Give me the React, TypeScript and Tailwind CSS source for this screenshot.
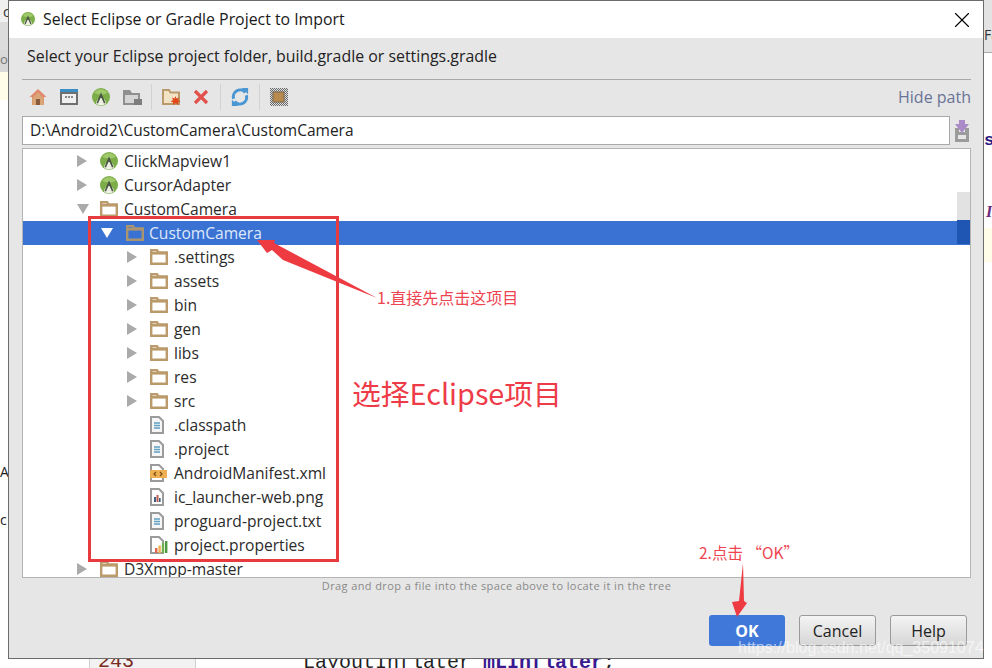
import React from "react"
import { X } from "lucide-react"

const uiFont = "font-['Open_Sans',sans-serif]"

// Android head with compass in a green disc, used on module rows and in the title bar
function AndroidIcon({ size = 18 }: { size?: number }) {
  return (
    <svg width={size} height={size} viewBox="0 0 18 18" className="shrink-0">
      <circle cx="9" cy="9" r="9" fill="#7dad48" />
      <path d="M2.2 5 A8 8 0 0 1 15.8 5 L9 7 Z" fill="#a0c96b" />
      <path d="M4 15.5 A5 5.4 0 0 1 14 15.5 A8 8 0 0 1 4 15.5 Z" fill="#eef0e4" />
      <path d="M9 4.5 L10 6.5 L13.5 15 L12 15.6 L9.6 10 H8.4 L6 15.6 L4.5 15 L8 6.5 Z" fill="#4c5646" />
      <circle cx="6.8" cy="11.6" r="0.7" fill="#4c5646" />
      <circle cx="11.2" cy="11.6" r="0.7" fill="#4c5646" />
    </svg>
  )
}

function FolderIcon({ fill = "#ffffff", stroke = "#bb9b6c" }: { fill?: string; stroke?: string }) {
  return (
    <svg width="18" height="16" viewBox="0 0 18 16" className="shrink-0">
      <path d="M1.2 14.8 V1.2 H7 L8.5 3.5 H16.8 V14.8 Z" fill={fill} stroke={stroke} strokeWidth="2.4" />
      <rect x="1" y="3" width="16" height="2.6" fill={stroke} />
    </svg>
  )
}

function TextFileIcon() {
  return (
    <svg width="14" height="18" viewBox="0 0 14 18" className="shrink-0">
      <path d="M1 1 H9 L13 5 V17 H1 Z" fill="#f6f6f6" stroke="#9b9b9b" strokeWidth="2" />
      <path d="M4 7 H10 M4 9.5 H10 M4 12 H10" stroke="#5f9fc4" strokeWidth="1.3" />
    </svg>
  )
}

function XmlFileIcon() {
  return (
    <svg width="17" height="18" viewBox="0 0 17 18" className="shrink-0">
      <path d="M1 1 H9 L13 5 V17 H1 Z" fill="#fff" stroke="#9b9b9b" strokeWidth="2" />
      <rect x="0" y="6" width="17" height="8" fill="#eeb052" />
      <path d="M6 8 L4 10 L6 12 M10 8 L12 10 L10 12" fill="none" stroke="#7a4a12" strokeWidth="1.2" />
    </svg>
  )
}

function ImageFileIcon() {
  return (
    <svg width="14" height="18" viewBox="0 0 14 18" className="shrink-0">
      <path d="M1 1 H9 L13 5 V17 H1 Z" fill="#fff" stroke="#9b9b9b" strokeWidth="2" />
      <rect x="4" y="9" width="2" height="5" fill="#3f5f86" />
      <rect x="6.5" y="7" width="2" height="7" fill="#c25b4f" />
      <rect x="9" y="10" width="1.6" height="4" fill="#3f5f86" />
    </svg>
  )
}

function ChartFileIcon() {
  return (
    <svg width="18" height="18" viewBox="0 0 18 18" className="shrink-0">
      <path d="M1 1 H9 L13 5 V17 H1 Z" fill="#fff" stroke="#9b9b9b" strokeWidth="2" />
      <rect x="5" y="12" width="2.4" height="5" fill="#e2644f" />
      <rect x="8.4" y="9.5" width="2.4" height="7.5" fill="#eeb052" />
      <rect x="11.8" y="7" width="2.4" height="10" fill="#6fb04a" />
      <rect x="15" y="5" width="2.4" height="12" fill="#4f9a3f" />
    </svg>
  )
}

function Toolbar() {
  return (
    <div className="flex items-center h-[34px] pl-[7px] justify-between">
      <div className="flex items-center">
        <span className="w-[18px] mr-[13px] flex justify-center">
          <svg width="18" height="18" viewBox="0 0 18 18">
            <path d="M9 1 L17.5 9 L15 9 L15 17 H3 V9 H0.5 Z" fill="#e08a6c" />
            <path d="M3.5 10 L9 4.6 L14.5 10 V17 H3.5 Z" fill="#d9a678" />
            <rect x="7" y="11" width="4" height="6" fill="#8a5a3c" />
          </svg>
        </span>
        <span className="w-[18px] mr-[14px]">
          <svg width="18" height="16" viewBox="0 0 18 16">
            <rect x="0" y="0" width="18" height="16" fill="#6f6f6f" />
            <rect x="0" y="0" width="18" height="3" fill="#3c8fc4" />
            <rect x="2" y="5" width="14" height="9" fill="#f0f0f0" />
            <path d="M5 8 H7 M8 8 H10 M11 8 H13" stroke="#666" strokeWidth="1.4" />
          </svg>
        </span>
        <span className="w-[18px] mr-[13px]"><AndroidIcon /></span>
        <span className="w-[18px] mr-[10px]">
          <svg width="19" height="15" viewBox="0 0 19 15">
            <path d="M0 15 V0 H7 L9 3 H17 V15 Z" fill="#8f8f8f" />
            <rect x="2" y="5" width="13" height="8" fill="#d5d5d5" />
            <rect x="11" y="9" width="8" height="6" fill="#7d7d7d" />
          </svg>
        </span>
        <span className="w-px h-[26px] bg-[#d2d2d2] mr-[10px]" />
        <span className="w-[19px] mr-[12px]">
          <svg width="19" height="16" viewBox="0 0 19 16">
            <path d="M1 15 V1 H7 L8.5 3.5 H17 V15 Z" fill="#f1e3c4" stroke="#b99a6b" strokeWidth="2" />
            <path d="M13.5 7 L14.5 9.5 L17.5 8.5 L16 11 L18.5 12.5 L16 13 L16.5 16 L13.5 14 L11 16 L11 13.3 L8.5 12.5 L11 11 L10 8.5 L12.6 9.5 Z" fill="#e1481c" />
          </svg>
        </span>
        <span className="w-[16px] mr-[11px]">
          <svg width="16" height="16" viewBox="0 0 16 16">
            <path d="M2 2 L14 14 M14 2 L2 14" stroke="#e2524d" strokeWidth="3.2" />
          </svg>
        </span>
        <span className="w-px h-[26px] bg-[#d2d2d2] mr-[10px]" />
        <span className="w-[20px] mr-[8px]">
          <svg width="18" height="20" viewBox="0 0 20 20" fill="none">
            <path d="M16 5 A7.5 7.5 0 0 0 3 12" stroke="#4a96d3" strokeWidth="3.4" />
            <path d="M4 15 A7.5 7.5 0 0 0 17 8" stroke="#4a96d3" strokeWidth="3.4" />
            <path d="M12 0 H19 V7 Z M8 20 H1 V13 Z" fill="#4a96d3" />
          </svg>
        </span>
        <span className="w-px h-[26px] bg-[#d2d2d2] mr-[10px]" />
        <span className="w-[18px]">
          <svg width="18" height="18" viewBox="0 0 18 18">
            <defs>
              <pattern id="stipple" width="2" height="2" patternUnits="userSpaceOnUse">
                <rect width="2" height="2" fill="#e0e0e0" />
                <rect width="1" height="1" fill="#6a6a6a" />
                <rect x="1" y="1" width="1" height="1" fill="#6a6a6a" />
              </pattern>
            </defs>
            <rect width="18" height="18" fill="url(#stipple)" />
            <rect x="3" y="4" width="11" height="10" fill="#b98a4e" stroke="#7d6a52" />
          </svg>
        </span>
      </div>
      <span className="text-[16px] text-[#6a7396]">Hide path</span>
    </div>
  )
}

type Row = { label: string; indent: number; arrow?: "right" | "down"; icon: React.ReactNode; selected?: boolean }

const rows: Row[] = [
  { label: "ClickMapview1", indent: 54, arrow: "right", icon: <AndroidIcon /> },
  { label: "CursorAdapter", indent: 54, arrow: "right", icon: <AndroidIcon /> },
  { label: "CustomCamera", indent: 54, arrow: "down", icon: <FolderIcon /> },
  { label: "CustomCamera", indent: 78, arrow: "down", icon: <FolderIcon fill="#3a72d4" stroke="#ab9570" />, selected: true },
  { label: ".settings", indent: 104, arrow: "right", icon: <FolderIcon /> },
  { label: "assets", indent: 104, arrow: "right", icon: <FolderIcon /> },
  { label: "bin", indent: 104, arrow: "right", icon: <FolderIcon /> },
  { label: "gen", indent: 104, arrow: "right", icon: <FolderIcon /> },
  { label: "libs", indent: 104, arrow: "right", icon: <FolderIcon /> },
  { label: "res", indent: 104, arrow: "right", icon: <FolderIcon /> },
  { label: "src", indent: 104, arrow: "right", icon: <FolderIcon /> },
  { label: ".classpath", indent: 104, icon: <TextFileIcon /> },
  { label: ".project", indent: 104, icon: <TextFileIcon /> },
  { label: "AndroidManifest.xml", indent: 104, icon: <XmlFileIcon /> },
  { label: "ic_launcher-web.png", indent: 104, icon: <ImageFileIcon /> },
  { label: "proguard-project.txt", indent: 104, icon: <TextFileIcon /> },
  { label: "project.properties", indent: 104, icon: <ChartFileIcon /> },
  { label: "D3Xmpp-master", indent: 54, arrow: "right", icon: <FolderIcon /> },
]

function TreeRow({ row }: { row: Row }) {
  return (
    <div className={`flex items-center h-6 shrink-0 ${row.selected ? "bg-[#3a72d4] text-[#dfe9fa]" : "text-[#2b2b2b]"}`}>
      <span className="shrink-0" style={{ width: row.indent }} />
      <span className={`shrink-0 flex ${row.selected ? "w-[25px]" : "w-[23px]"}`}>
        {row.arrow === "right" && (
          <svg width="10" height="12" viewBox="0 0 10 12"><path d="M0 0 L10 6 L0 12 Z" fill="#aaaaaa" /></svg>
        )}
        {row.arrow === "down" && (
          <svg width="12" height="10" viewBox="0 0 12 10"><path d="M0 0 H12 L6 10 Z" fill={row.selected ? "#ffffff" : "#aaaaaa"} /></svg>
        )}
      </span>
      <span className={`shrink-0 flex ${row.selected ? "w-[23px]" : "w-[24px]"}`}>{row.icon}</span>
      <span className="text-[15.6px] whitespace-nowrap leading-none pt-[2px]">{row.label}</span>
    </div>
  )
}

function Tree() {
  return (
    <div className="relative h-[430px] border border-[#b4b4b4] bg-white overflow-hidden flex flex-col">
      <div className="flex flex-col">
        {rows.map((row, i) => (
          <TreeRow key={i} row={row} />
        ))}
      </div>
      {/* scrollbar thumb sits over the rows */}
      <div className="absolute right-0 top-[43px] w-[13px] flex flex-col">
        <div className="h-[28px] bg-[#e2e2e2]" />
        <div className="h-6 bg-[#1f56b4]" />
      </div>
    </div>
  )
}

function DialogButton({ label, primary }: { label: string; primary?: boolean }) {
  return primary ? (
    <button className="w-[76px] h-[31px] rounded-[3px] bg-[#3f78d8] text-white text-[16px] font-bold">{label}</button>
  ) : (
    <button className="w-[77px] h-[31px] rounded-[3px] border border-[#9a9a9a] bg-gradient-to-b from-[#f4f4f4] to-[#d6d6d6] text-[#222] text-[16px]">
      {label}
    </button>
  )
}

// Bits of the IDE window left showing around the dialog
function Backdrop() {
  return (
    <>
      <div className="absolute left-0 top-0 w-2 h-[72px] bg-[#f0f0f0] overflow-hidden">
        <span className="absolute left-[3px] top-[1px] text-[14px] text-[#333]">c</span>
        <span className="absolute left-0 top-[22px] w-2 h-[28px] bg-[#dcdcdc]" />
        <span className="absolute left-0 top-[50px] w-2 h-[22px] bg-[#d8d8d8] text-[13px] text-[#777]">oi</span>
      </div>
      <div className="absolute left-0 top-[72px] w-2 h-7 bg-[#fffde8]" />
      <span className="absolute left-0 top-[461px] text-[14px] text-[#222]">A</span>
      <span className="absolute left-0 top-[509px] text-[14px] text-[#222]">c</span>
      <div className="absolute left-[984px] top-0 w-2 h-[53px] overflow-hidden bg-[#e3e3e3]">
        <span className="absolute left-0 top-[24px] text-[14px] text-[#333]">Fa</span>
        <span className="absolute left-0 top-[52px] w-2 h-px bg-[#aaa]" />
      </div>
      <span className="absolute left-[984px] top-[128px] text-[17px] font-bold text-[#2a1a80] font-['Liberation_Mono',monospace]">s</span>
      <span className="absolute left-[986px] top-[200px] text-[16px] font-bold italic text-[#6a2a80] font-['Liberation_Serif',serif]">I</span>
      <div className="absolute left-[984px] top-[228px] w-2 h-[34px] bg-[#fffde8]" />
      <div className="absolute left-[89px] top-[659px] w-[107px] h-[9px] bg-[#f2f2f2] border-l border-r border-[#cfcfcf]" />
      <div className="absolute left-[98px] top-[652px] text-[20px] leading-5 text-[#7a2a20] font-['Liberation_Mono',monospace]">243</div>
      <div className="absolute left-[303px] top-[653px] text-[20px] leading-5 text-[#222] font-['Liberation_Mono',monospace] whitespace-pre">
        LayoutInflater <b className="text-[#3a1a90] font-bold">mLInflater</b>;
      </div>
    </>
  )
}

function Annotations() {
  return (
    <>
      <div className="absolute left-[88px] top-[216px] w-[251px] h-[346px] border-[3px] border-[#e83b40]" />
      <svg className="absolute left-0 top-0 pointer-events-none" width="992" height="668">
        <path d="M257 240 L275 240 L274 243 L377 298 L283 260 L272 250 L267 253 Z" fill="#ee3b42" />
        <path d="M743 563 L744 601 L747 603 L737 617 L732 602 L739 601 Z" fill="#ee3b42" />
      </svg>
      <span className="absolute left-[377px] top-[287px] text-[16px] leading-5 text-[#ee4450] font-['Noto_Sans_CJK_SC',sans-serif] whitespace-nowrap">
        1.直接先点击这项目
      </span>
      <span className="absolute left-[352px] top-[373px] text-[28.8px] leading-10 text-[#ee3b48] font-['Noto_Sans_CJK_SC',sans-serif] whitespace-nowrap">
        选择Eclipse项目
      </span>
      <span className="absolute left-[699px] top-[542px] text-[15.5px] leading-5 text-[#ee4450] font-['Noto_Sans_CJK_SC',sans-serif] whitespace-nowrap">
        2.点击 “OK”
      </span>
      <span className="absolute left-[738px] top-[638px] text-[16px] leading-5 text-white/60 font-['Liberation_Sans',sans-serif] whitespace-nowrap">
        https://blog.csdn.net/qq_35091074
      </span>
    </>
  )
}

export default function App() {
  return (
    <div className={`relative w-[992px] h-[668px] bg-white overflow-hidden ${uiFont}`}>
      <Backdrop />
      <div className="absolute left-2 top-0 w-[976px] h-[659px] border border-[#6b6b6b] bg-[#e6e6e6] flex flex-col">
        {/* Title bar */}
        <div className="h-[37px] shrink-0 bg-white flex items-center pl-3 pr-[8px] justify-between">
          <div className="flex items-center gap-2 text-[15.85px] text-[#1a1a1a]">
            <AndroidIcon size={14} />
            <span>Select Eclipse or Gradle Project to Import</span>
          </div>
          <X size={26} strokeWidth={1} className="text-black" />
        </div>

        <div className="flex-1 flex flex-col pl-[13px] pr-3 min-h-0">
          <p className="h-[41px] shrink-0 pl-[5px] pb-[3px] flex items-center text-[15.9px] text-[#222]">
            Select your Eclipse project folder, build.gradle or settings.gradle
          </p>
          <div className="h-px bg-[#a8a8a8] shrink-0" />
          <Toolbar />
          <div className="flex items-center gap-[3px] mt-[2px] shrink-0">
            <div className="flex-1 h-[29px] border border-[#a9a9a9] bg-white flex items-center pl-[7px] text-[15.5px] text-[#222]">
              D:\Android2\CustomCamera\CustomCamera
            </div>
            <svg width="18" height="22" viewBox="0 0 18 22" className="shrink-0">
              <path d="M2 8 H6 V12 H12 V8 H16 V22 H2 Z" fill="#9b9b9b" />
              <rect x="5" y="15" width="8" height="4" fill="#e6e6e6" />
              <path d="M6 0 H12 V4 H16 L9 13 L2 4 H6 Z" fill="#ab8ac8" />
            </svg>
          </div>
          <div className="mt-[3px] shrink-0">
            <Tree />
          </div>
          <p className="h-4 shrink-0 flex items-center justify-center text-[11px] tracking-[0.4px] text-[#8a8a8a]">
            Drag and drop a file into the space above to locate it in the tree
          </p>
          <div className="flex justify-end gap-[14px] mt-[21px] pr-[4px]">
            <DialogButton label="OK" primary />
            <DialogButton label="Cancel" />
            <DialogButton label="Help" />
          </div>
        </div>
      </div>
      <Annotations />
    </div>
  )
}
